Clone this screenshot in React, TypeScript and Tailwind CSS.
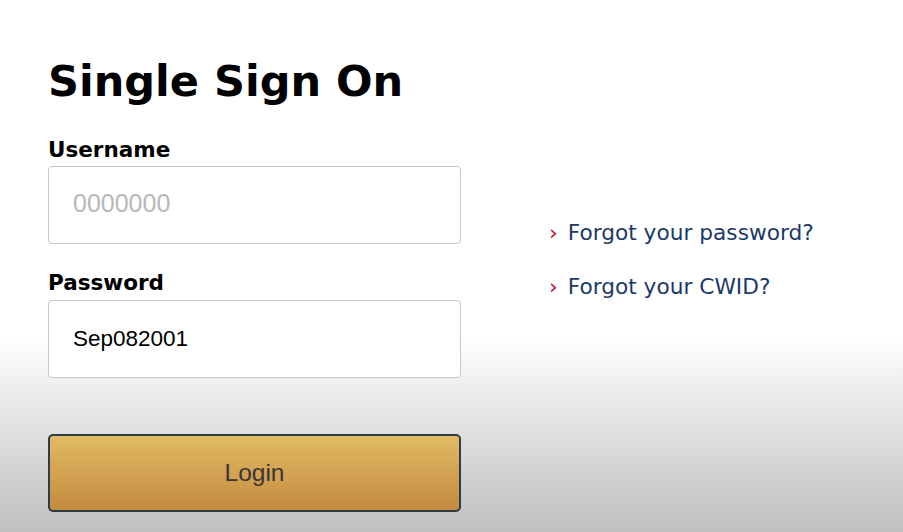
import { useState } from "react";

const VERDANA = "font-['DejaVu_Sans','Verdana',sans-serif]";
const ARIAL = "font-['Liberation_Sans','Arial',sans-serif]";

function Field({
  label,
  value,
  placeholder,
  onChange,
  labelClass,
}: {
  label: string;
  value: string;
  placeholder?: string;
  onChange: (v: string) => void;
  labelClass: string;
}) {
  return (
    <div className="flex flex-col">
      <label className={`${VERDANA} ${labelClass} text-[21.5px] leading-[24px] font-bold text-black`}>
        {label}
      </label>
      <input
        type="text"
        value={value}
        placeholder={placeholder}
        onChange={(e) => onChange(e.target.value)}
        className={`${ARIAL} h-[78px] w-full rounded-[4px] border border-[#c6c6c6] bg-white pl-[24px] text-[22.5px] text-black outline-none placeholder:text-[25px] placeholder:text-[#b8b8b8]`}
      />
    </div>
  );
}

export default function App() {
  const [username, setUsername] = useState("");
  const [password, setPassword] = useState("Sep082001");

  return (
    <div className="flex h-screen w-full bg-[linear-gradient(to_bottom,#ffffff_0px,#ffffff_335px,#bfbfbf_532px)] pl-12 pt-[60px]">
      <div className="flex w-[413px] flex-col">
        <h1 className={`${VERDANA} text-[43px] leading-[42px] font-bold text-black`}>
          Single Sign On
        </h1>

        <div className="mt-9 flex flex-col gap-[3px]">
          <Field
            label="Username"
            value={username}
            placeholder="0000000"
            onChange={setUsername}
            labelClass="mb-1"
          />
          <Field
            label="Password"
            value={password}
            onChange={setPassword}
            labelClass="mt-6 mb-[5px]"
          />
        </div>

        <button
          type="button"
          className={`${ARIAL} mt-14 h-[78px] w-full rounded-[5px] border-2 border-[#2d3d47] bg-[linear-gradient(to_bottom,#e1ba64,#c48b40)] text-[24.5px] text-[#3a3636]`}
        >
          Login
        </button>
      </div>

      <div className={`${VERDANA} ml-[88px] flex flex-col gap-[29px] pt-[160px] text-[21.7px] leading-[25px] text-[#1b3a68]`}>
        <a href="#" className="flex items-center">
          <span className="mr-[10px] text-[#c8102e]">›</span>
          Forgot your password?
        </a>
        <a href="#" className="flex items-center">
          <span className="mr-[10px] text-[#c8102e]">›</span>
          Forgot your CWID?
        </a>
      </div>
    </div>
  );
}
